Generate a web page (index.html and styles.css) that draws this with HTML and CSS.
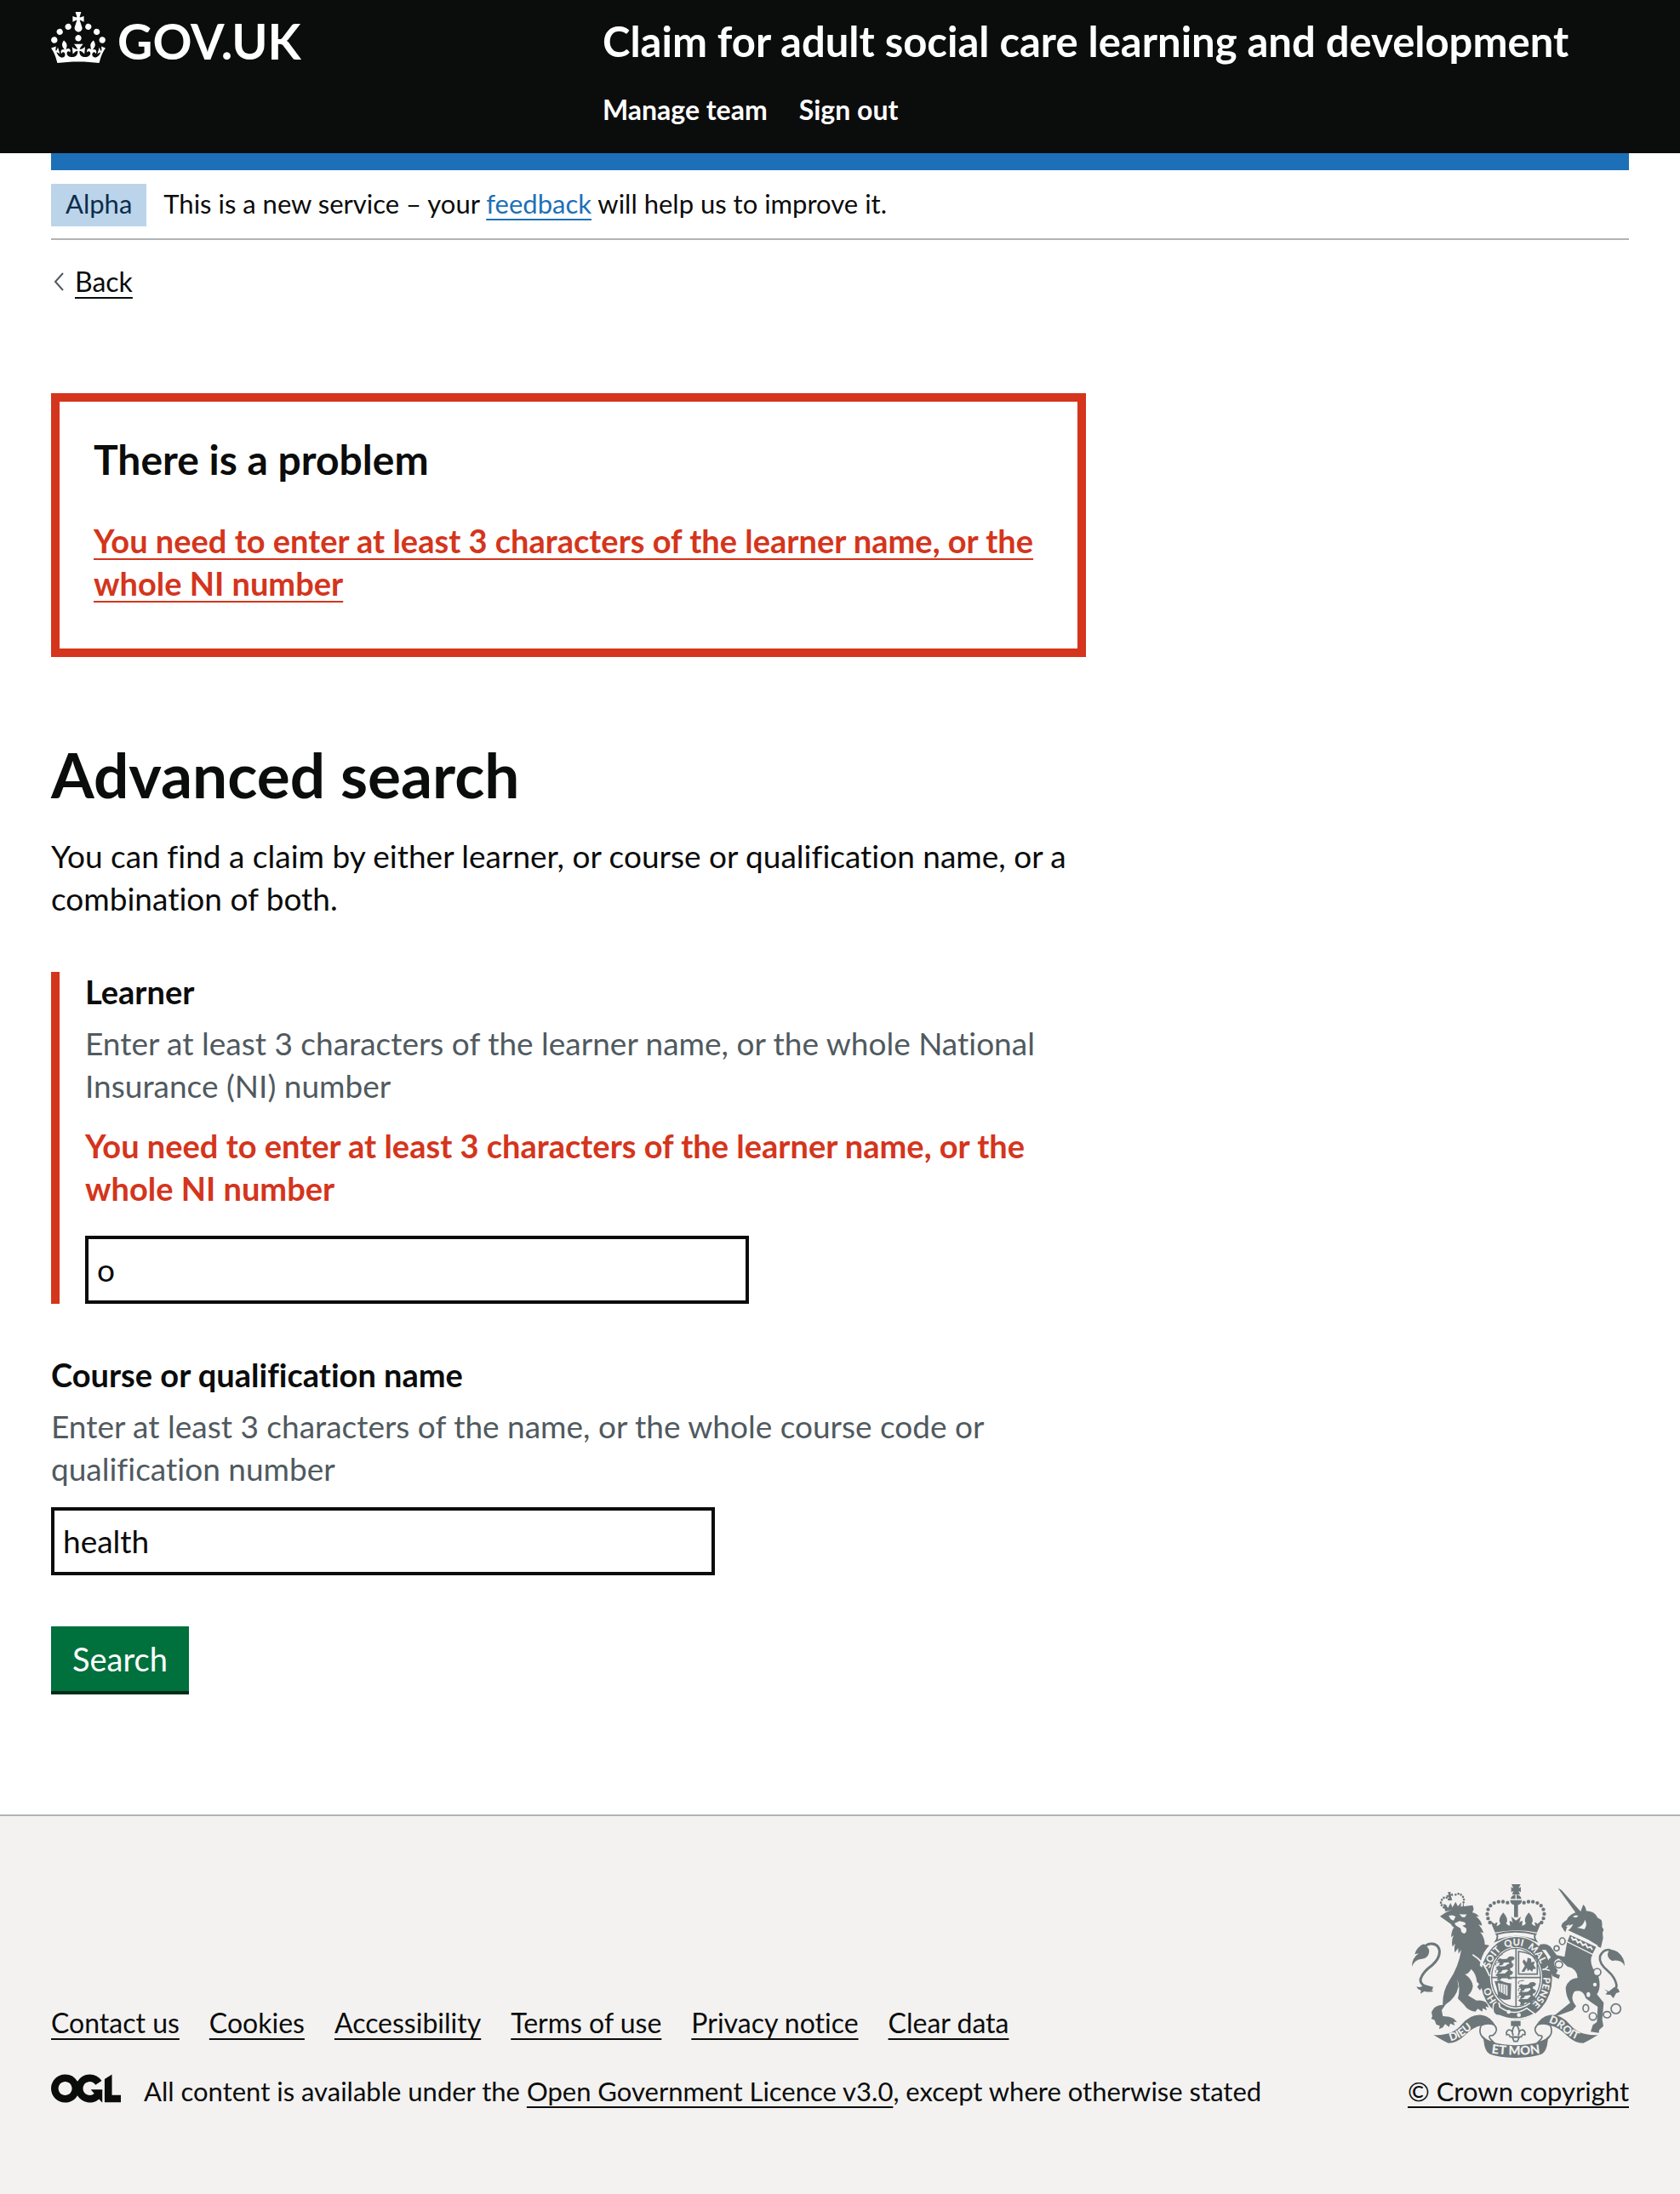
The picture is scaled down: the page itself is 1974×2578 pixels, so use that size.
FILE: index.html
```html
<!DOCTYPE html>
<html lang="en">
<head>
<meta charset="utf-8">
<meta name="viewport" content="width=device-width, initial-scale=1">
<title>Advanced search - Claim for adult social care learning and development</title>
<link rel="stylesheet" href="styles.css">
</head>
<body>
<header class="header">
  <div class="header-inner wrap">
    <a class="logo" href="#" aria-label="GOV.UK">
      <svg class="crown" viewBox="0 0 32 30" aria-hidden="true"><path fill="currentColor" d="M22.6 10.4c-1 .4-2-.1-2.4-1-.4-.9.1-2 1-2.4.9-.4 2 .1 2.4 1s-.1 2-1 2.4m-5.9 6.7c-.9.4-2-.1-2.4-1-.4-.9.1-2 1-2.4.9-.4 2 .1 2.4 1s-.1 2-1 2.4m10.8-3.7c-1 .4-2-.1-2.4-1-.4-.9.1-2 1-2.4.9-.4 2 .1 2.4 1s0 2-1 2.4m3.3 4.8c-1 .4-2-.1-2.4-1-.4-.9.1-2 1-2.4.9-.4 2 .1 2.4 1s-.1 2-1 2.4M17 4.7l2.3 1.2V2.5l-2.3.7-.2-.2.9-3h-3.4l.9 3-.2.2c-.1.1-2.3-.7-2.3-.7v3.4L15 4.7c.1.1.1.2.2.2l-1.3 4c-.1.2-.1.4-.1.6 0 1.1.8 2 1.9 2.2h.7c1-.2 1.9-1.1 1.9-2.1 0-.2 0-.4-.1-.6l-1.3-4c-.1-.2 0-.2.1-.3m-7.6 5.7c.9.4 2-.1 2.4-1 .4-.9-.1-2-1-2.4-.9-.4-2 .1-2.4 1s0 2 1 2.4m-5 3c.9.4 2-.1 2.4-1 .4-.9-.1-2-1-2.4-.9-.4-2 .1-2.4 1s.1 2 1 2.4m-3.2 4.8c.9.4 2-.1 2.4-1 .4-.9-.1-2-1-2.4-.9-.4-2 .1-2.4 1s0 2 1 2.4m14.8 11c4.4 0 8.6.3 12.3.8 1.1-4.5 2.4-7 3.7-8.8l-2.5-.9c.2 1.3.3 1.9 0 2.7-.4-.4-.8-1.1-1.1-2.3l-1.2 4c.7-.5 1.3-.8 2-.9-1.1 2.5-2.6 3.1-3.5 3-1.1-.2-1.7-1.2-1.5-2.1.3-1.2 1.5-1.5 2.1-.1 1.1-2.3-.8-3-2-2.3 1.9-1.9 2.1-3.5.6-5.6-2.1 1.6-2.1 3.2-1.2 5.5-1.2-1.4-3.2-.6-2.5 1.6.9-1.4 2.1-.5 1.9.8-.2 1.1-1.7 2.1-3.5 1.9-2.7-.2-2.9-2.1-2.9-3.6.7-.1 1.9.5 2.9 1.9l.4-4.3c-1.1 1.1-2.1 1.4-3.2 1.4.4-1.2 2.1-3 2.1-3h-5.4s1.7 1.9 2.1 3c-1.1 0-2.1-.2-3.2-1.4l.4 4.3c1-1.4 2.2-2 2.9-1.9-.1 1.5-.2 3.4-2.9 3.6-1.9.2-3.4-.8-3.5-1.9-.2-1.3 1-2.2 1.9-.8.7-2.3-1.2-3-2.5-1.6.9-2.2.9-3.9-1.2-5.5-1.5 2-1.3 3.7.6 5.6-1.2-.7-3.1 0-2 2.3.6-1.4 1.8-1.1 2.1.1.2.9-.3 1.9-1.5 2.1-.9.2-2.4-.5-3.5-3 .6 0 1.2.3 2 .9l-1.2-4c-.3 1.1-.7 1.9-1.1 2.3-.3-.8-.2-1.4 0-2.7l-2.9.9C1.3 23 2.6 25.5 3.7 30c3.7-.5 7.9-.8 12.3-.8"/></svg>
      <span class="logo-text">GOV.UK</span>
    </a>
    <div class="header-content">
      <a class="service-name" href="#">Claim for adult social care learning and development</a>
      <nav class="header-nav" aria-label="Account">
        <a href="#">Manage team</a>
        <a href="#">Sign out</a>
      </nav>
    </div>
  </div>
</header>

<div class="wrap">
  <div class="header-bar"></div>
  <div class="phase">
    <strong class="tag">Alpha</strong>
    <span class="phase-text">This is a new service – your <a class="link" href="#">feedback</a> will help us to improve it.</span>
  </div>
  <a class="back" href="#">
    <svg class="back-icon" viewBox="0 0 12 22" aria-hidden="true"><path d="M11 1 2 11l9 10" fill="none" stroke="#505a5f" stroke-width="2"/></svg>
    <span class="back-text">Back</span>
  </a>

  <main class="main">
    <div class="error-summary" role="alert">
      <h2 class="error-title">There is a problem</h2>
      <a class="error-link" href="#learner">You need to enter at least 3 characters of the learner name, or the whole NI number</a>
    </div>
    <h1 class="title">Advanced search</h1>
    <p class="intro">You can find a claim by either learner, or course or qualification name, or a combination of both.</p>
    <form>
      <div class="group group-error">
        <label class="label" for="learner">Learner</label>
        <p class="hint" id="learner-hint">Enter at least 3 characters of the learner name, or the whole National Insurance (NI) number</p>
        <p class="error-message" id="learner-error">You need to enter at least 3 characters of the learner name, or the whole NI number</p>
        <input class="input" id="learner" type="text" value="o" aria-describedby="learner-hint learner-error">
      </div>
      <div class="group">
        <label class="label" for="course">Course or qualification name</label>
        <p class="hint" id="course-hint">Enter at least 3 characters of the name, or the whole course code or qualification number</p>
        <input class="input" id="course" type="text" value="health" aria-describedby="course-hint">
      </div>
      <button class="button" type="submit">Search</button>
    </form>
  </main>
</div>

<footer class="footer">
  <div class="footer-inner wrap">
    <div class="footer-meta">
      <nav class="footer-links" aria-label="Support links">
        <a href="#">Contact us</a>
        <a href="#">Cookies</a>
        <a href="#">Accessibility</a>
        <a href="#">Terms of use</a>
        <a href="#">Privacy notice</a>
        <a href="#">Clear data</a>
      </nav>
      <div class="licence">
        <svg class="ogl" viewBox="0 0 483.2 195.7" aria-hidden="true"><path fill="currentColor" d="M421.5 142.8V.1l-50.7 32.3v161.1h112.4v-50.7zm-122.3-9.6A47.12 47.12 0 0 1 221 97.8c0-26 21.1-47.1 47.1-47.1 16.7 0 31.4 8.7 39.7 21.8l42.7-27.2A97.63 97.63 0 0 0 268.1 0c-36.5 0-68.3 20.1-85.1 49.7A98 98 0 0 0 97.8 0C43.9 0 0 43.9 0 97.8s43.9 97.8 97.8 97.8c36.5 0 68.3-20.1 85.1-49.7a97.76 97.76 0 0 0 149.6 25.4l19.4 22.2h3v-87.8h-80l24.3 27.5zM97.8 145c-26 0-47.1-21.1-47.1-47.1s21.1-47.1 47.1-47.1 47.1 21.1 47.1 47.1S123.8 145 97.8 145"/></svg>
        <span>All content is available under the <a href="#">Open Government Licence v3.0</a>, except where otherwise stated</span>
      </div>
    </div>
    <a class="copyright" href="#">
      <svg class="crest" viewBox="54 42 750 612" aria-hidden="true">
        <defs>
          <path id="garter" d="M421 486A96 114 0 0 1 421 258A96 114 0 0 1 421 486"/>
          <path id="dieu" d="M190 595Q222 588 248 565Q270 545 300 535"/>
          <path id="droit" d="M535 530Q565 538 590 562Q620 590 665 598"/>
          <path id="etmon" d="M325 636Q421 652 515 636"/>
          <g id="walking"><path d="M0 10l10-8 8 3 16-1 9-8 12-1 8 6-5 8-7 2 1 8 9 5-15 1-5-9-17 2-5 8-14 2 5-8-3-5z"/><path d="M2 2Q-4-8 8-9l12-2" fill="none" stroke="#6d777a" stroke-width="3"/></g>
        </defs>
        <g fill="#6d777a">
          <!-- royal crown -->
          <path d="M405 42h32l-7 14 8-4v18l-8-4 5 12h-28l5-12-8 4V52l8 4zM402 94q2-13 17-16v16zM423 78q15 3 17 16h-17zM400 98h42q-2 15-14 17v43h-14v-43q-12-2-14-17z"/>
          <g fill="none" stroke="#6d777a" stroke-width="13" stroke-linecap="round" stroke-dasharray="0 16">
            <path d="M391 107Q365 98 340 110Q317 125 320 155Q324 170 333 184"/>
            <path d="M449 107Q475 98 500 110Q523 125 520 155Q516 170 507 184"/>
          </g>
          <path d="M330 170L346 182Q348 176 356 177L352 190Q362 188 366 180Q355 166 376 142Q397 166 386 180Q392 188 400 188L398 172Q408 170 410 180L404 156L421 170L438 156L432 180Q434 170 444 172L442 188Q450 188 456 180Q445 166 466 142Q487 166 476 180Q480 188 490 190L486 177Q494 176 496 182L512 170L495 212Q421 198 347 212Z"/>
          <path d="M352 218Q421 200 490 218Q482 226 492 242Q421 212 350 242Q360 226 352 218Z" fill="#f3f2f1" stroke="#6d777a" stroke-width="6"/>
          <!-- garter -->
          <ellipse cx="422" cy="374" rx="128" ry="148" stroke="#f3f2f1" stroke-width="4"/>
          <ellipse cx="421" cy="372" rx="92" ry="109" fill="#f3f2f1"/>
          <ellipse cx="421" cy="371" rx="86" ry="103" fill="none" stroke="#6d777a" stroke-width="4"/>
          <path d="M421 268v206M333 371h176" stroke="#6d777a" stroke-width="5"/>
          <use href="#walking" x="354" y="301"/><use href="#walking" x="349" y="327"/><use href="#walking" x="348" y="352"/>
          <use href="#walking" x="429" y="392"/><use href="#walking" x="429" y="417"/><use href="#walking" x="428" y="442"/>
          <path d="M430 279v80h66v-52q-24-25-66-28z" fill="none" stroke="#6d777a" stroke-width="5"/>
          <path d="M440 350l12-20-8-14 4-9 11 11 3-17 12 4 1 12 13-3-5 12 9 14-11 1-3 10-9-8-7 6-3-12-9 14z"/>
          <path d="M345 383q12 4 16-4 28 14 43 12l-2 56q-25 8-47-10 6-8-10-54zm12 8 4 28 30 17V398z" fill-rule="evenodd"/>
          <path d="M366 392v30M375 396v32M384 398v34" stroke="#6d777a" stroke-width="3"/>
          <path d="M342 463q20-14 22 12 50 35 95 4l28 20q-60 34-128 5-24-8-17-41z" stroke="#f3f2f1" stroke-width="5"/>
          <path d="M360 456q-20 10-14 36 8 12 18 6" fill="none" stroke="#6d777a" stroke-width="5"/>
          <circle cx="395" cy="492" r="7" fill="#f3f2f1"/><circle cx="431" cy="503" r="7" fill="#f3f2f1"/>
          <g class="crest-text" fill="#f3f2f1" font-size="34" text-anchor="middle">
            <text><textPath href="#garter" startOffset="106">HO</textPath></text>
            <text><textPath href="#garter" startOffset="236">SOIT</textPath></text>
            <text><textPath href="#garter" startOffset="323">QUI</textPath></text>
            <text><textPath href="#garter" startOffset="408">MAL</textPath></text>
            <text><textPath href="#garter" startOffset="466">Y</textPath></text>
            <text><textPath href="#garter" startOffset="546">PENSE</textPath></text>
          </g>
          <!-- lion -->
          <path d="M172 138l-8-26 10 2 7 12 9-18 7 16 11-20 8 16 12-14-2 18 7-4 2-18 3 24q-34 3-66 12z"/>
          <path d="M166 124q-14-12-8-24 4-9 12-12 12 2 14 8M236 106q4-12-4-22-8-10-18-8-10 4-10 10" fill="none" stroke="#6d777a" stroke-width="8" stroke-linecap="round" stroke-dasharray="0 10"/>
          <path d="M181 69l10 1-1 7 8-3 1 10-8-2 5 16-10 2-3-14-6 4-1-10 7 1z"/>
          <path d="M153 155l20-13q35-20 70-23l25-3 4 14-5 12q14 2 24 14l-11-1q20 16 21 33l-12-4q14 16 18 30l-12-3q16 20 16 44 8 0 16 3-20 18-31 56l-3 14 22 24 14 32q6 22-4 17l-4-6-4 16-7-6-2 12-9-9-5 8-10-12 7-10-8-8q-2-28-20-45-10 18-22 18 26 18 28 42-2 18-17 33l30 18q28-2 38 12l5 12-11-3 4 14-14-8-2 12-16-10-8 10q-26-2-40-24l-22-22q10-38-2-68l4 26q-8 40-45 63l-14 20 4 21 22 2 16 6 12 13-12-1 4 13-16-7-4 12-14-10-8 12-13 6 2-12-12-4-6-16-12-5 4-8-3-15 6-10q6-14 34-16-2-46 22-84 34-50 43-110l-10 14-1-20-12 16q-3-22 2-32l-10 11q-5-22 4-40l-9 7q2-24 10-35-8-4-10-11z"/>
          <path d="M184 153q12-4 24 3l-7 14q-12-2-17-17zM222 146q10 4 25 2l-6 10q-12 3-19-12zM204 180l18-8 18 4 4 8-12 4 14 10q2 16-8 18-12-2-12-18l-16-10z" fill="#f3f2f1"/>
          <path d="M268 290q40 24 60 76" fill="none" stroke="#f3f2f1" stroke-width="5"/>
          <path d="M127 411Q78 400 85 375Q94 350 125 328Q154 302 151 276Q146 250 120 252Q104 254 96 266" fill="none" stroke="#6d777a" stroke-width="9"/>
          <path d="M54 332q0-30 24-46l-14 3q6-26 32-36 14 8 19 22 0 26-25 30-26 2-36 27zM70 402q14 8 28-6l32 8-10 9 10 7q-20 4-32-1l-14 9 2-12q-12-2-16-14z"/>
          <!-- unicorn -->
          <path d="M569 56l12 6 67 75-14 9z"/>
          <path d="M650 134l8-20q10 8 10 22 32 2 40 24l14 8q4 14 2 24l6 10-4 12 2 18-8 34q-10-2-14-10l-30-18-64-30-8-4q12-6 18-22-14 4-22 14l-5 15-6-7q-4-10-8-12 0-12 10-18 10-4 14-16 16-16 47-22z"/>
          <path d="M621 157q8-9 20-3l-8 6zM596 190l14-6-6 10zM636 195q22-4 28-28 10 18-2 34z" fill="#f3f2f1"/>
          <path d="M602 240l90 48q-14 20 0 50l20 30q10 40-6 62l24 30-5 60 4 22-15 14-1 10-29-4 8-24 14-10 3-54q-22-14-42-30-10-34-40-24-18 24 6 52l-12 14-56 20-15 20-24 2 16-20 18-6 52-42q-16-24-16-54 10-32 42-34-2-34-36-40l-30-28q-20 6-16 24l12 18-6 12 14 4-4 14-22-10-16-34q-6-22 10-32l-18-26-20-2-6-8 6-10q26-6 40 12l18 26 28 6z"/>
          <path d="M610 218l96 44-14 28-92-46z" stroke="#f3f2f1" stroke-width="4"/>
          <path d="M616 228l6 10 10-2 7 12 9-4 8 13 10-4 8 13 10-3 6 10" fill="none" stroke="#f3f2f1" stroke-width="6"/>
          <path d="M742 428Q778 420 775 396Q770 370 745 348Q712 320 717 296Q728 272 748 273Q766 278 766 290" fill="none" stroke="#6d777a" stroke-width="8"/>
          <path d="M804 330q0-30-26-50-22-12-30-4-12 24 12 36 32-6 44 18zM732 412l16 8 20-16 14 8 4 10-12 4-10 18-10-12-18-2 8-8z"/>
          <g fill="#f3f2f1" stroke="#6d777a" stroke-width="5">
            <ellipse cx="584" cy="243" rx="10" ry="12"/><ellipse cx="564" cy="268" rx="9" ry="9"/><ellipse cx="572" cy="325" rx="13" ry="12"/><circle cx="707" cy="352" r="13"/><circle cx="699" cy="396" r="9"/><ellipse cx="676" cy="431" rx="9" ry="11"/><ellipse cx="667" cy="479" rx="10" ry="13"/><circle cx="692" cy="508" r="13"/><ellipse cx="742" cy="502" rx="13" ry="11"/><circle cx="773" cy="481" r="17"/>
          </g>
          <!-- motto ribbon -->
          <path d="M130 573Q195 578 228 538Q258 500 300 503Q330 506 352 545Q318 530 300 540Q270 545 240 575Q212 602 182 602Q160 592 130 573zM710 573Q645 578 612 538Q582 500 540 503Q510 506 488 545Q522 530 540 540Q570 545 600 575Q628 602 658 602Q680 592 710 573z"/>
          <g fill="#f3f2f1" stroke="#6d777a" stroke-width="5"><path d="M298 540Q285 570 312 590L345 602Q312 574 340 575Q362 556 344 538Q320 528 298 540zM542 540Q555 570 528 590L495 602Q528 574 500 575Q478 556 496 538Q520 528 542 540z"/></g>
          <path d="M304 575Q320 605 420 610Q520 605 536 575L530 612Q524 636 508 642Q480 653 420 654Q360 653 332 642Q316 636 310 612z"/>
          <path d="M403 524h34v18h-34z"/>
          <path d="M420 536Q402 555 411 575Q408 555 396 555Q384 560 388 573Q396 568 400 580H440Q444 568 452 573Q456 560 444 555Q432 555 429 575Q438 555 420 536zM408 582h24l-6 14h-12z" fill="#f3f2f1" stroke="#6d777a" stroke-width="5"/>
          <g class="crest-text" fill="#f3f2f1" font-size="38">
            <text><textPath href="#dieu">DIEU</textPath></text>
            <text><textPath href="#droit">DROIT</textPath></text>
            <text font-size="44" text-anchor="middle"><textPath href="#etmon" startOffset="50%">ET MON</textPath></text>
          </g>
        </g>
      </svg>
      <span class="copyright-text">© Crown copyright</span>
    </a>
  </div>
</footer>
</body>
</html>
```
FILE: styles.css
```css
* { box-sizing: border-box; }

body {
  margin: 0;
  background: #fff;
  color: #0b0c0c;
  font-family: Lato, "Liberation Sans", sans-serif;
  font-size: 37px;
  font-variant-ligatures: none;
  line-height: 50px;
}

h1, h2, p { margin: 0; }

a {
  color: inherit;
  text-decoration-thickness: 2px;
  text-underline-offset: 6px;
  text-decoration-skip-ink: none;
}

.wrap { margin: 0 60px; }

/* Header */
.header {
  background: #0b0c0c;
  color: #fff;
}
.header a { text-decoration: none; }
.header-inner {
  display: grid;
  grid-template-columns: 1fr 2fr;
  column-gap: 45px;
  padding: 14px 0 31px;
}
.logo {
  display: flex;
  align-items: flex-start;
  gap: 14px;
}
.crown {
  width: 64px;
  height: 60px;
}
.logo-text {
  font-size: 57px;
  font-weight: 700;
  line-height: 68px;
}
.header-content {
  display: flex;
  flex-direction: column;
  gap: 31px;
  padding-top: 4px;
}
.service-name {
  font-size: 49px;
  font-weight: 700;
  line-height: 60px;
}
.header-nav {
  display: flex;
  gap: 37px;
  font-size: 32px;
  font-weight: 700;
  line-height: 40px;
}
.header-bar {
  height: 20px;
  background: #1d70b8;
}

/* Phase banner */
.phase {
  display: flex;
  align-items: flex-start;
  gap: 20px;
  padding: 16px 0 14px;
  border-bottom: 2px solid #b1b4b6;
  font-size: 31px;
  line-height: 46px;
}
.tag {
  padding: 0 17px 4px;
  background: #bbd4ea;
  color: #0c2d4a;
  font-weight: 400;
}
.link { color: #1d70b8; }

.back {
  display: flex;
  align-items: center;
  gap: 13px;
  width: fit-content;
  margin-top: 29px;
  padding-left: 3px;
  font-size: 32px;
  line-height: 40px;
  text-decoration: none;
}
.back-icon {
  width: 12px;
  height: 22px;
}
.back-text {
  text-decoration: underline 2px;
}

/* Main column */
.main {
  width: calc(100% * 2 / 3 - 20px);
  padding: 111px 0 145px;
}
.error-summary {
  padding: 38px 40px 52px;
  border: 10px solid #d4351c;
}
.error-title {
  margin-bottom: 40px;
  font-size: 48px;
  line-height: 60px;
}
.error-link {
  display: block;
  color: #d4351c;
  font-size: 38px;
  font-weight: 700;
}
.title {
  margin-top: 98px;
  font-size: 73px;
  line-height: 80px;
}
.intro { margin: 31px 0 61px; }

.group {
  margin-bottom: 60px;
  padding-top: 2px;
}
.group-error {
  padding-left: 30px;
  border-left: 10px solid #d4351c;
}
.label {
  display: block;
  margin-bottom: 15px;
  font-size: 38px;
  font-weight: 700;
  line-height: 42px;
}
.hint {
  margin-bottom: 20px;
  color: #505a5f;
}
.error-message {
  margin-bottom: 31px;
  color: #d4351c;
  font-size: 38px;
  font-weight: 700;
}
.input {
  display: block;
  width: 780px;
  max-width: 100%;
  height: 80px;
  padding: 0 10px 2px;
  border: 4px solid #0b0c0c;
  border-radius: 0;
  background: #fff;
  color: #0b0c0c;
  font: inherit;
}
.button {
  display: block;
  padding: 13px 25px;
  border: 0;
  background: #00703c;
  box-shadow: 0 4px 0 #002d18;
  color: #fff;
  font: inherit;
  font-size: 38px;
}

/* Footer */
.footer {
  padding: 80px 0 101px;
  border-top: 2px solid #b1b4b6;
  background: #f3f2f1;
  font-size: 31px;
  line-height: 40px;
}
.footer-inner {
  display: flex;
  align-items: flex-end;
  justify-content: space-between;
}
.footer-meta {
  display: flex;
  flex-direction: column;
  gap: 40px;
}
.footer-links {
  display: flex;
  flex-wrap: wrap;
  gap: 35px;
  font-size: 32px;
}
.licence {
  display: flex;
  align-items: flex-start;
  gap: 27px;
}
.ogl {
  flex: none;
  width: 82px;
  height: 34px;
}
.copyright {
  display: flex;
  flex-direction: column;
  align-items: center;
  gap: 19px;
  text-decoration: none;
}
.crest {
  width: 250px;
  height: 204px;
}
.crest-text {
  font-family: Lato, sans-serif;
  font-weight: 900;
}
.copyright-text { text-decoration: underline 2px; }
```
